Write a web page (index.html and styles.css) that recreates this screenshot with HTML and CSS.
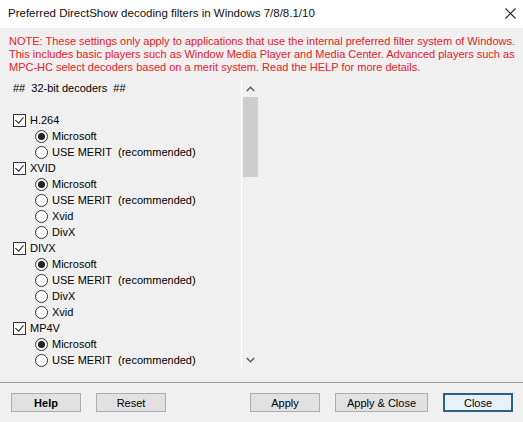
FILE: index.html
```html
<!doctype html>
<html>
<head>
<meta charset="utf-8">
<link rel="stylesheet" href="styles.css">
<title>Preferred DirectShow decoding filters</title>
</head>
<body>
<div class="window">
  <div class="titlebar">
    <span class="title">Preferred DirectShow decoding filters in Windows 7/8/8.1/10</span>
    <span class="close">
      <svg width="11" height="11" viewBox="0 0 11 11"><path d="M0.5 0.5 L10.5 10.5 M10.5 0.5 L0.5 10.5" stroke="#222" stroke-width="1.1" fill="none"/></svg>
    </span>
  </div>

  <p class="note">NOTE: These settings only apply to applications that use the internal preferred filter system of Windows.<br>
  This includes basic players such as Window Media Player and Media Center. Advanced players such as<br>
  MPC-HC select decoders based on a merit system. Read the HELP for more details.</p>

  <div class="panel">
    <div class="list">
      <div class="row head">##&nbsp; 32-bit decoders &nbsp;##</div>
      <div class="row"></div>

      <div class="row group"><span class="check"></span>H.264</div>
      <div class="row opt"><span class="radio on"></span>Microsoft</div>
      <div class="row opt"><span class="radio"></span>USE MERIT&nbsp; (recommended)</div>

      <div class="row group"><span class="check"></span>XVID</div>
      <div class="row opt"><span class="radio on"></span>Microsoft</div>
      <div class="row opt"><span class="radio"></span>USE MERIT&nbsp; (recommended)</div>
      <div class="row opt"><span class="radio"></span>Xvid</div>
      <div class="row opt"><span class="radio"></span>DivX</div>

      <div class="row group"><span class="check"></span>DIVX</div>
      <div class="row opt"><span class="radio on"></span>Microsoft</div>
      <div class="row opt"><span class="radio"></span>USE MERIT&nbsp; (recommended)</div>
      <div class="row opt"><span class="radio"></span>DivX</div>
      <div class="row opt"><span class="radio"></span>Xvid</div>

      <div class="row group"><span class="check"></span>MP4V</div>
      <div class="row opt"><span class="radio on"></span>Microsoft</div>
      <div class="row opt"><span class="radio"></span>USE MERIT&nbsp; (recommended)</div>
    </div>
    <div class="scrollbar">
      <div class="arrow">
        <svg width="9" height="6" viewBox="0 0 9 6"><path d="M0.8 5 L4.5 1.3 L8.2 5" stroke="#606060" stroke-width="1.6" fill="none"/></svg>
      </div>
      <div class="track"><div class="thumb"></div></div>
      <div class="arrow">
        <svg width="9" height="6" viewBox="0 0 9 6"><path d="M0.8 1 L4.5 4.7 L8.2 1" stroke="#606060" stroke-width="1.6" fill="none"/></svg>
      </div>
    </div>
  </div>

  <div class="footer">
    <div class="left">
      <button class="btn bold">Help</button>
      <button class="btn">Reset</button>
    </div>
    <div class="right">
      <button class="btn">Apply</button>
      <button class="btn wide">Apply &amp; Close</button>
      <button class="btn default">Close</button>
    </div>
  </div>
</div>
</body>
</html>
```

FILE: styles.css
```css
html, body {
    margin: 0;
    padding: 0;
}
body {
    font-family: "Liberation Sans", Arial, sans-serif;
    font-size: 11px;
    color: #000;
    background-color: #f0f0f0;
    width: 523px;
    height: 422px;
    overflow: hidden;
}
.window {
    display: flex;
    flex-direction: column;
    height: 422px;
}
.titlebar {
    height: 28px;
    background-color: #fff;
    display: flex;
    align-items: center;
    justify-content: space-between;
    padding: 0 7px 0 8px;
    font-size: 11.5px;
}
.title {
    color: #111;
    margin-top: -3px;
}
.close {
    display: flex;
    margin-top: -2px;
}
.note {
    margin: 0;
    padding: 7px 9px 0 9px;
    height: 45px;
    color: #e8201f;
    line-height: 13px;
    white-space: nowrap;
}
.panel {
    display: flex;
    height: 288px;
}
.list {
    width: 241px;
    border-right: 1px solid #fff;
}
.row {
    height: 16px;
    line-height: 16px;
    display: flex;
    align-items: center;
    white-space: nowrap;
}
.head {
    padding-left: 13px;
}
.group {
    padding-left: 13px;
}
.opt {
    padding-left: 35px;
}
.check {
    width: 11px;
    height: 11px;
    border: 1px solid #333;
    background: #fff;
    margin-right: 4px;
    position: relative;
}
.check:after {
    content: "";
    position: absolute;
    left: 3px;
    top: 0px;
    width: 4px;
    height: 7px;
    border-right: 1px solid #222;
    border-bottom: 1px solid #222;
    transform: rotate(40deg);
}
.radio {
    width: 11px;
    height: 11px;
    border: 1px solid #333;
    border-radius: 50%;
    background: #fff;
    margin-right: 4px;
    position: relative;
}
.radio.on:after {
    content: "";
    position: absolute;
    left: 2px;
    top: 2px;
    width: 7px;
    height: 7px;
    border-radius: 50%;
    background: #222;
}
.scrollbar {
    width: 17px;
    display: flex;
    flex-direction: column;
    background: #f0f0f0;
}
.arrow {
    height: 17px;
    display: flex;
    align-items: center;
    justify-content: center;
}
.track {
    flex: 1;
    padding: 0 1px;
}
.thumb {
    height: 80px;
    background: #cdcdcd;
}
.footer {
    margin-top: 14px;
    border-top: 1px solid #a0a0a0;
    display: flex;
    justify-content: space-between;
    padding: 10px 10px 0 11px;
}
.left, .right {
    display: flex;
    gap: 15px;
}
.btn {
    font-family: inherit;
    font-size: 11px;
    width: 70px;
    height: 19px;
    padding: 0;
    background: #e1e1e1;
    border: 1px solid #adadad;
    color: #000;
}
.bold {
    font-weight: bold;
}
.wide {
    width: 93px;
}
.default {
    border: 2px solid #2a6188;
    background: #e5f1fb;
}
```
